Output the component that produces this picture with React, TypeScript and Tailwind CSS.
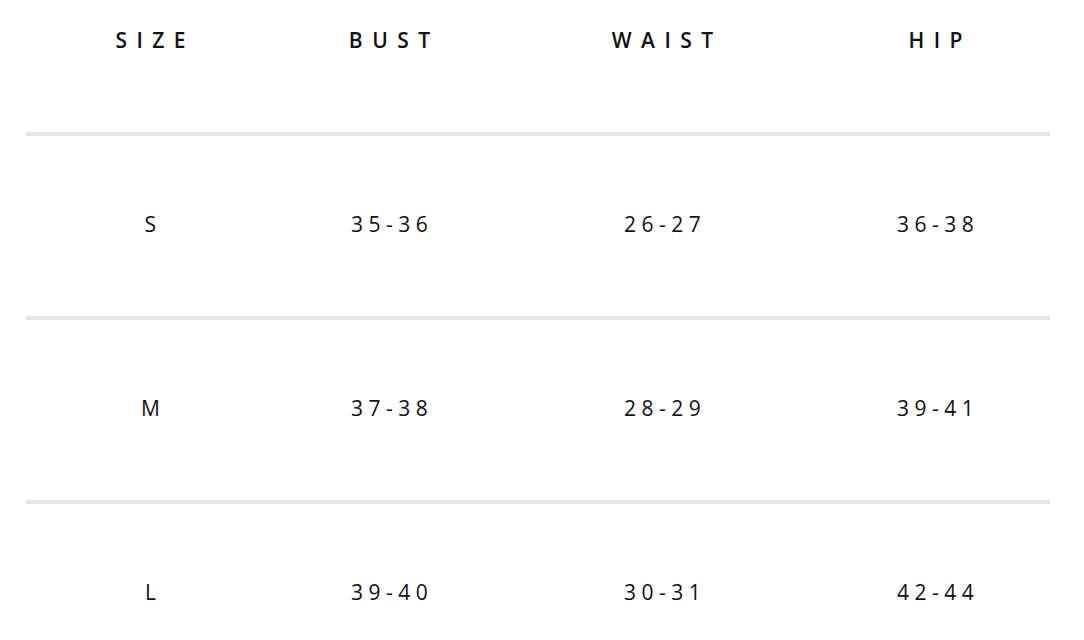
const headers = ["SIZE", "BUST", "WAIST", "HIP"];

const rows = [
  ["S", "35-36", "26-27", "36-38"],
  ["M", "37-38", "28-29", "39-41"],
  ["L", "39-40", "30-31", "42-44"],
];

const cols = "grid grid-cols-[250px_228px_318px_228px]";

export default function App() {
  return (
    <div
      className="min-h-screen bg-white text-[#111]"
      style={{ fontFamily: '"Open Sans", "Liberation Sans", sans-serif' }}
    >
      <div className="ml-[26px] w-[1024px]">
        <div className={`${cols} h-[132px] pt-[26px]`}>
          {headers.map((h) => (
            <div
              key={h}
              className="text-center text-[21px] leading-[28px] font-semibold tracking-[0.45em] pl-[0.4em]"
            >
              {h}
            </div>
          ))}
        </div>
        {rows.map((r) => (
          <div
            key={r[0]}
            className={`${cols} h-[184px] border-t-4 border-[#e5e5e5] items-center pb-[4px]`}
          >
            {r.map((c, i) => (
              <div
                key={i}
                className="text-center text-[21px] leading-[28px] tracking-[0.26em] pl-[0.2em]"
              >
                {c}
              </div>
            ))}
          </div>
        ))}
      </div>
    </div>
  );
}
